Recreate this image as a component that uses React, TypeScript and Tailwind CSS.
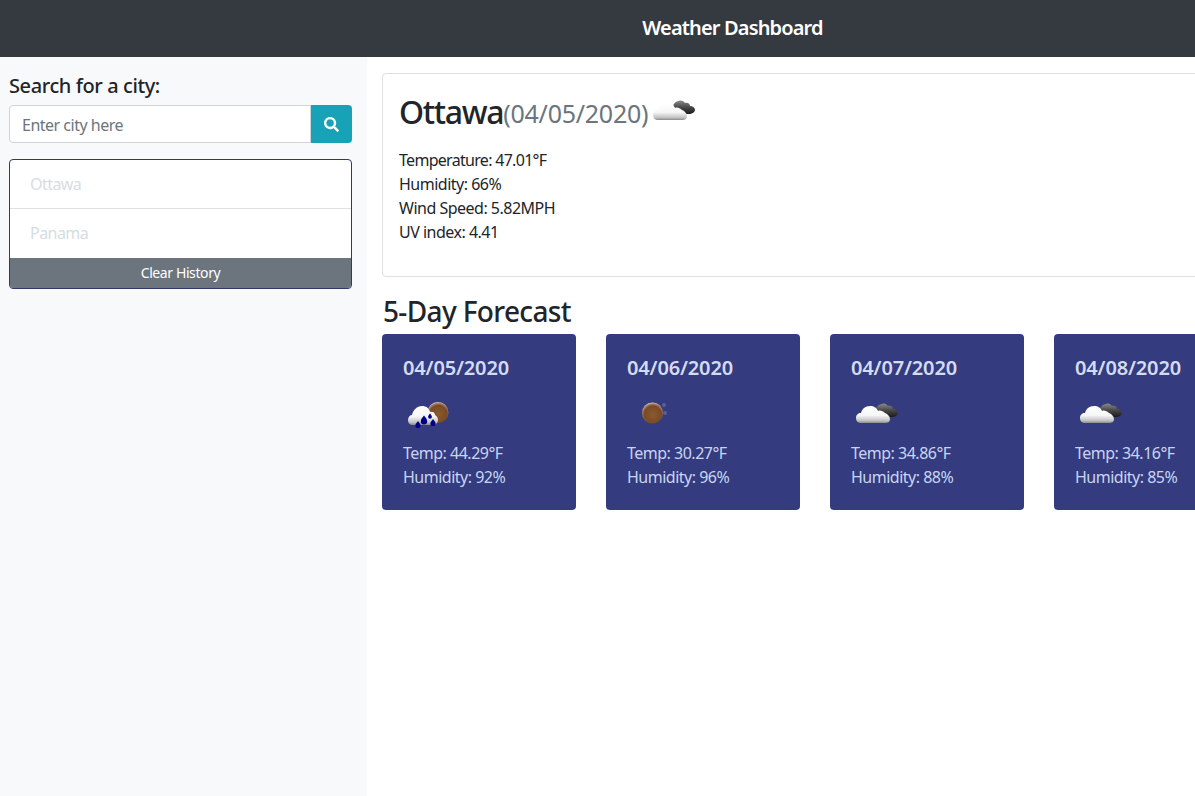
import React from "react";
import { FaSearch } from "react-icons/fa";

const font = { fontFamily: '"Noto Sans", "Open Sans", sans-serif' };

function Defs() {
  return (
    <svg width="0" height="0" className="absolute">
      <defs>
        <linearGradient id="cw" x1="0" y1="0" x2="0" y2="1">
          <stop offset="0" stopColor="#ffffff" />
          <stop offset="0.55" stopColor="#f6f6f6" />
          <stop offset="0.85" stopColor="#c4c4c4" />
          <stop offset="1" stopColor="#8c8c8c" />
        </linearGradient>
        <linearGradient id="cd" x1="0" y1="0" x2="0" y2="1">
          <stop offset="0" stopColor="#8a8a8a" />
          <stop offset="0.5" stopColor="#484848" />
          <stop offset="1" stopColor="#1c1c1c" />
        </linearGradient>
        <radialGradient id="moon" cx="0.52" cy="0.58" r="0.58">
          <stop offset="0" stopColor="#8a5a30" />
          <stop offset="0.72" stopColor="#7a4a24" />
          <stop offset="0.9" stopColor="#a8876a" />
          <stop offset="1" stopColor="#e0d8cc" />
        </radialGradient>
      </defs>
    </svg>
  );
}

function CloudDark() {
  return (
    <svg width="50" height="50" viewBox="0 0 50 50">
      <path d="M25 20c0-3 3-6 6-6 2-1 5 0 6 2 3-1 5 1 5 3 3 0 5 2 5 4s-3 4-6 4H32c-4 0-7-3-7-7z" fill="url(#cd)" />
      <path d="M10 33c-3 0-5-2-5-5 0-3 2-5 5-5 1-4 4-7 9-7 4 0 7 2 8 5 2-1 5 0 7 2 3 1 5 4 5 6 0 3-2 4-5 4z" fill="url(#cw)" />
    </svg>
  );
}

function RainMoon() {
  return (
    <svg width="50" height="50" viewBox="0 0 50 50">
      <circle cx="35" cy="22.5" r="10.5" fill="url(#moon)" />
      <path d="M10 35c-3 0-5-2-5-5 0-3 2-5 4-5 1-5 5-9 10-9 4 0 7 2 8 6 3-1 5 1 5 3 2 1 3 3 3 5s-2 5-4 5z" fill="url(#cw)" />
      <path d="M21 25.500c1.500 2 3.200 3.500 3.200 5.700a3.200 3.200 0 0 1-6.400 0c0-2.200 1.700-3.700 3.200-5.700z" fill="#00008b" />
      <path d="M15 31c1.200 1.600 2.600 2.800 2.600 4.500a2.600 2.600 0 0 1-5.200 0c0-1.700 1.400-2.900 2.600-4.500z" fill="#00008b" />
      <path d="M30 29c1.200 1.600 2.600 2.800 2.600 4.500a2.600 2.600 0 0 1-5.200 0c0-1.700 1.400-2.900 2.600-4.500z" fill="#00008b" />
      <path d="M27 23.500c.9 1.200 1.900 2.100 1.900 3.300a1.900 1.900 0 0 1-3.800 0c0-1.200 1-2.100 1.900-3.300z" fill="#00008b" />
    </svg>
  );
}

function Moon() {
  return (
    <svg width="50" height="50" viewBox="0 0 50 50">
      <circle cx="25.500" cy="23" r="10.500" fill="url(#moon)" />
      <circle cx="37" cy="15" r="2" fill="#5a5f94" />
      <circle cx="38" cy="23" r="2" fill="#5a5f94" />
    </svg>
  );
}

const days = [
  { d: "04/05/2020", t: "44.29", h: "92", icon: <RainMoon /> },
  { d: "04/06/2020", t: "30.27", h: "96", icon: <Moon /> },
  { d: "04/07/2020", t: "34.86", h: "88", icon: <CloudDark /> },
  { d: "04/08/2020", t: "34.16", h: "85", icon: <CloudDark /> },
  { d: "04/09/2020", t: "36.12", h: "80", icon: <CloudDark /> },
];

export default function App() {
  return (
    <div className="w-[1195px] h-[796px] overflow-hidden bg-white text-[#212529]" style={font}>
      <Defs />
      <div className="w-[1465px] h-full flex flex-col">
        <header className="h-[57px] shrink-0 bg-[#343a40] flex items-center justify-center pb-[2px] text-white text-[20px] font-semibold tracking-[-0.85px]">
          Weather Dashboard
        </header>
        <div className="flex-1 flex">
          <aside className="w-[367px] shrink-0 bg-[#f8f9fa] px-[9px] pt-[16px]">
            <h2 className="text-[20px] leading-[26px] font-medium tracking-[-0.4px] mb-[6px]">Search for a city:</h2>
            <div className="flex w-[343px] h-[38px]">
              <input
                placeholder="Enter city here"
                className="flex-1 min-w-0 bg-white border border-[#ced4da] rounded-l-[4px] px-[12px] pt-[2px] text-[16px] tracking-[-0.5px] placeholder:text-[#6c757d] outline-none"
              />
              <button className="w-[41px] bg-[#17a2b8] rounded-r-[4px] flex items-center justify-center text-white">
                <FaSearch size={15} />
              </button>
            </div>
            <div className="mt-[16px] w-[343px] border border-[#2f3a6b] rounded-[4px] overflow-hidden bg-white">
              <div className="h-[49px] px-[20px] flex items-center border-b border-[#dfe1e3] text-[#d6dde3] text-[16px] tracking-[-0.55px]">Ottawa</div>
              <div className="h-[49px] px-[20px] pb-[2px] flex items-center text-[#d6dde3] text-[16px] tracking-[-0.55px]">Panama</div>
              <button className="w-full h-[30px] pb-px bg-[#6c757d] text-white text-[14px] tracking-[-0.4px] flex items-center justify-center">Clear History</button>
            </div>
          </aside>
          <main className="flex-1 pl-[15px] pr-[16px] pt-[16px]">
            <section className="h-[204px] border border-[#dfdfdf] rounded-[4px] pl-[16px] pr-[17px] pt-[16px]">
              <div className="flex items-center h-[44px]">
                <span className="text-[32px] font-medium tracking-[-1.3px]">Ottawa</span>
                <span className="text-[25px] text-[#6c757d] tracking-[-0.25px] mt-[3px]">(04/05/2020)</span>
                <span className="ml-0"><CloudDark /></span>
              </div>
              <div className="mt-[14px] text-[16px] leading-[24px] tracking-[-0.5px]">
                <div className="tracking-[-0.7px]">Temperature: 47.01°F</div>
                <div>Humidity: 66%</div>
                <div>Wind Speed: 5.82MPH</div>
                <div>UV index: 4.41</div>
              </div>
            </section>
            <h3 className="mt-[17px] text-[28px] leading-[34px] font-medium tracking-[-0.65px] pl-px">5-Day Forecast</h3>
            <div className="mt-[6px] flex gap-[30px]">
              {days.map((x) => (
                <div key={x.d} className="w-[194px] h-[176px] shrink-0 rounded-[4px] bg-[#343b7f] px-[21px] pt-[20px] text-[#c9d6f2] text-[16px] leading-[24px] tracking-[-0.5px]">
                  <div className="text-[20px] leading-[28px] font-semibold tracking-[-0.15px] text-[#d4dcf2]">{x.d}</div>
                  <div className="h-[50px] mt-[8px]">{x.icon}</div>
                  <div className="mt-px">Temp: {x.t}°F</div>
                  <div>Humidity: {x.h}%</div>
                </div>
              ))}
            </div>
          </main>
        </div>
      </div>
    </div>
  );
}
